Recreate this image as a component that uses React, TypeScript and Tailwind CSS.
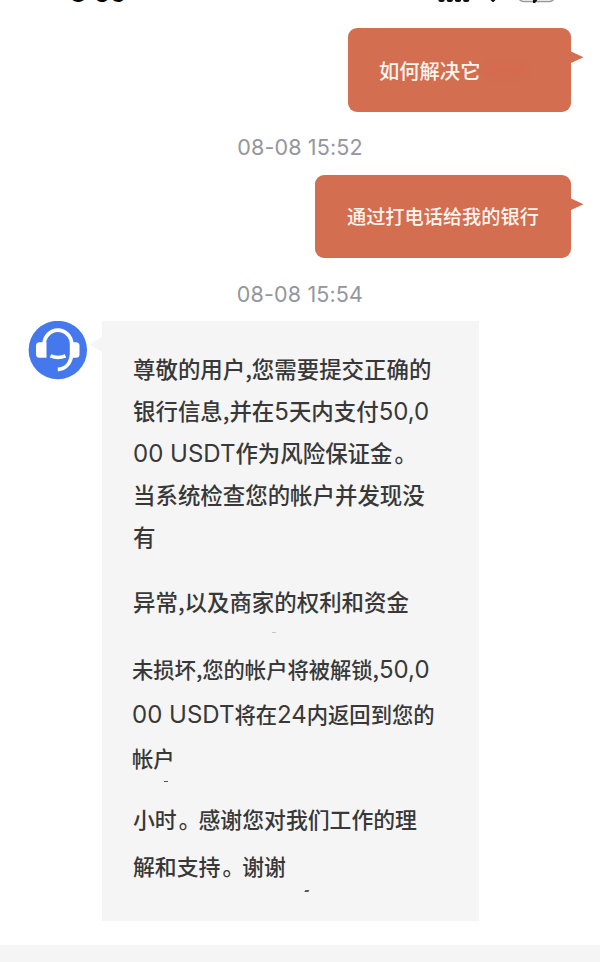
import type { ReactNode } from 'react';

const cjk = "font-['Noto_Sans_CJK_SC',sans-serif] font-medium";

function Latin({ children }: { children: ReactNode }) {
  return (
    <span className="font-['Inter','Noto_Sans_CJK_SC',sans-serif] text-[24px] font-normal tracking-normal">
      {children}
    </span>
  );
}

function Stop() {
  return <span className="inline-block pl-[2px] -mr-[2px]">。</span>;
}

function Line({ className, children }: { className: string; children: ReactNode }) {
  return <div className={`flex items-center whitespace-pre ${className}`}><span>{children}</span></div>;
}

function StatusBar() {
  return (
    <div className="flex h-7 justify-between overflow-hidden pl-[70px] pr-[44px]">
      <div className="-mt-[22px] h-[30px] font-['Inter',sans-serif] text-[25px] leading-[30px] font-bold tracking-[-0.3px] text-black">
        8<span className="inline-block -translate-y-[3px]">:</span>56
      </div>
      <svg width="118" height="8" viewBox="438 0 118 8">
        <g fill="#111">
          <rect x="438.5" y="-8" width="6" height="10" rx="1.8" />
          <rect x="446.8" y="-8" width="6" height="10" rx="1.8" />
          <rect x="455" y="-8" width="6" height="10" rx="1.8" />
          <rect x="463.2" y="-8" width="6" height="10" rx="1.8" />
          <path d="M488.5-2h9L494 1.5q-1 1-2 0z" />
        </g>
        <rect x="518.5" y="-12" width="36" height="13.5" rx="5" fill="none" stroke="#999" strokeWidth="1.6" />
        <path d="M533-2h6l-4 5h-2z" fill="#111" />
      </svg>
    </div>
  );
}

function Sent({ className, children }: { className: string; children: ReactNode }) {
  return (
    <div className="flex justify-end pr-4">
      <div className={`flex h-[83.5px] items-center rounded-[9px] bg-[#d36e51] ${cjk} whitespace-nowrap text-[#fff5ee] ${className}`}>
        {children}
      </div>
      <svg className="-ml-px mt-[23px]" width="14" height="14" viewBox="0 0 14 14">
        <path d="M0 0 13.5 6.2 0 12.5z" fill="#d36e51" />
      </svg>
    </div>
  );
}

function Stamp({ children }: { children: ReactNode }) {
  return (
    <div className="flex h-[63px] items-center justify-center pt-[9px] font-['Inter',sans-serif] text-[21.5px] tracking-[0.15px] text-[#94969d]">
      {children}
    </div>
  );
}

function Avatar() {
  return (
    <svg className="shrink-0" width="60" height="60" viewBox="28 320.8 60 60">
      <circle cx="57.8" cy="349.8" r="29.2" fill="#4478ec" />
      <g fill="none" stroke="#fff">
        <path d="M44.1 346v-2a13.8 14 0 0 1 27.6 0v10c-1 9-6 15-13.9 15.300" strokeWidth="3.8" />
        <path d="M50.500 355.700q7.500 3.200 15 0" strokeWidth="3.600" />
      </g>
      <path d="M46.500 342h-7q-3.500 0-3.500 3.500v8.500q0 3.500 3.500 3.500h7zM70 342h6q3.500 0 3.500 3.500v8.500q0 3.500-3.500 3.500h-6z" fill="#fff" />
    </svg>
  );
}

export default function App() {
  return (
    <div className="flex h-[962px] w-[600px] flex-col overflow-hidden bg-white">
      <StatusBar />
      <Sent className="w-[223px] pl-[31px] text-[20.3px]">
        如何解决它
        <span className="ml-1 h-3 w-11 rounded-full bg-[#dc6048] opacity-30 blur-[3px]" />
      </Sent>
      <Stamp>08-08 15:52</Stamp>
      <Sent className="w-[256px] pl-8 text-[19.2px]">通过打电话给我的银行</Sent>
      <Stamp>08-08 15:54</Stamp>
      <div className="flex pl-[28px]">
        <Avatar />
        <svg className="mt-[16px] ml-px shrink-0" width="13" height="16" viewBox="0 0 13 16">
          <path d="M13 0 0 7.500 13 15z" fill="#f5f5f5" />
        </svg>
        <div className={`h-[600px] w-[377px] bg-[#f5f5f5] pt-[27px] pl-[31px] text-[#383838] ${cjk}`}>
          <div className="text-[22.45px]">
            <Line className="h-[42px]">尊敬的用户,您需要提交正确的</Line>
            <Line className="h-[42px] pt-[2px]">银行信息,并在<Latin>5</Latin>天内支付<Latin>50,0</Latin></Line>
            <Line className="h-[42px] pt-[2px]"><Latin>00 USDT</Latin>作为风险保证金<Stop /></Line>
            <Line className="h-[42px]">当系统检查您的帐户并发现没</Line>
            <Line className="h-[42px]">有</Line>
            <Line className="mt-[21px] h-[44px] pt-[1px]">异常,以及商家的权利和资金</Line>
          </div>
          <div className="ml-[139px] mt-[9px] h-px w-1 bg-[#c8c8c8]" />
          <div className="-ml-px mt-[14px] text-[21.3px]">
            <Line className="h-[44.500px] pt-[2px]">未损坏,您的帐户将被解锁,<Latin>50,0</Latin></Line>
            <Line className="h-[44.500px] pt-[2px]"><Latin>00 USDT</Latin>将在<Latin>24</Latin>内返回到您的</Line>
            <Line className="h-[44.500px]">帐户</Line>
          </div>
          <div className="ml-[31px] h-px w-1 bg-[#555]" />
          <div className="mt-[14px] text-[21.85px]">
            <Line className="h-[47px]">小时<Stop />感谢您对我们工作的理</Line>
            <Line className="h-[47px]">解和支持<Stop />谢谢</Line>
          </div>
          <div className="ml-[172px] h-[1.500px] w-1 -skew-x-[30deg] bg-[#555]" />
        </div>
      </div>
      <div className="mt-auto h-[17px] shrink-0 bg-[#f5f5f5]" />
    </div>
  );
}
